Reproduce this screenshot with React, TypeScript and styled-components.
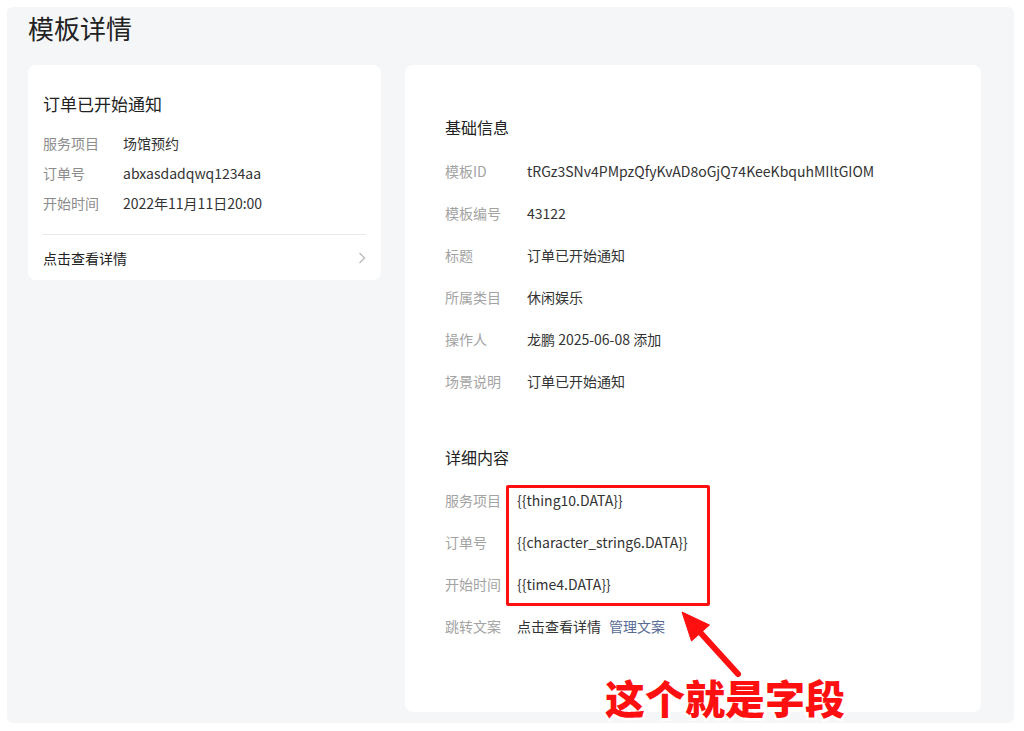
import React from 'react'
import styled, { createGlobalStyle } from 'styled-components'

const GlobalStyle = createGlobalStyle`
  html, body {
    margin: 0;
    padding: 0;
    background: #ffffff;
    font-family: "Noto Sans CJK SC", "Noto Sans", "Liberation Sans", sans-serif;
    color: #333333;
  }
  * {
    box-sizing: border-box;
  }
`

const Panel = styled.div`
  margin: 7px 10px 0 7px;
  height: 716px;
  background: #f5f6f8;
  border-radius: 6px;
  padding: 0 33px 0 21px;
  display: flex;
  flex-direction: column;
  gap: 16px;
`

const PageTitle = styled.h1`
  margin: 0;
  font-size: 26px;
  font-weight: 400;
  line-height: 42px;
  color: #222222;
`

const Columns = styled.div`
  display: flex;
  align-items: flex-start;
  gap: 24px;
`

const Card = styled.div<{ $width: number }>`
  position: relative;
  width: ${(p) => p.$width}px;
  background: #ffffff;
  border-radius: 8px;
`

const PreviewCard = styled(Card)`
  padding: 27px 15px 7px 15px;
`

const DetailCard = styled(Card)`
  height: 647px;
  padding: 50px 40px 0 40px;
`

const CardTitle = styled.div`
  font-size: 17px;
  line-height: 24px;
  color: #222222;
  margin-bottom: 12px;
`

const Row = styled.div<{ $height: number }>`
  display: flex;
  align-items: center;
  height: ${(p) => p.$height}px;
  font-size: 14px;
  white-space: nowrap;
`

const Label = styled.span<{ $width: number }>`
  width: ${(p) => p.$width}px;
  flex-shrink: 0;
  color: #a3a3a3;
`

const Value = styled.span`
  color: #333333;
`

const PreviewLabel = styled(Label)`
  color: #8c8c8c;
`

const Divider = styled.div`
  height: 1px;
  background: #e8e8e8;
  margin-top: 16px;
`

const LinkRow = styled(Row)`
  justify-content: space-between;
  color: #222222;
`

const SectionTitle = styled.div<{ $gap: number; $top?: number }>`
  font-size: 16px;
  line-height: 24px;
  color: #222222;
  margin-top: ${(p) => p.$top || 0}px;
  margin-bottom: ${(p) => p.$gap}px;
`

const ManageLink = styled.a`
  color: #576b95;
  text-decoration: none;
  margin-left: 8px;
`

const RedBox = styled.div`
  position: absolute;
  left: 101px;
  top: 420px;
  width: 204px;
  height: 121px;
  border: 3px solid #ff1010;
  border-radius: 2px;
`

const ArrowSvg = styled.svg`
  position: absolute;
  left: 265px;
  top: 535px;
`

const Annotation = styled.div`
  position: absolute;
  left: 200px;
  top: 608px;
  font-size: 40px;
  line-height: 48px;
  font-weight: 900;
  color: #ff1010;
  white-space: nowrap;
  letter-spacing: 0px;
  -webkit-text-stroke: 5px #ffffff;
  paint-order: stroke fill;
`

const previewRows = [
  { label: '服务项目', value: '场馆预约' },
  { label: '订单号', value: 'abxasdadqwq1234aa' },
  { label: '开始时间', value: '2022年11月11日20:00' },
]

const baseRows = [
  { label: '模板ID', value: 'tRGz3SNv4PMpzQfyKvAD8oGjQ74KeeKbquhMIltGIOM' },
  { label: '模板编号', value: '43122' },
  { label: '标题', value: '订单已开始通知' },
  { label: '所属类目', value: '休闲娱乐' },
  { label: '操作人', value: '龙鹏 2025-06-08 添加' },
  { label: '场景说明', value: '订单已开始通知' },
]

const fieldRows = [
  { label: '服务项目', value: '{{thing10.DATA}}' },
  { label: '订单号', value: '{{character_string6.DATA}}' },
  { label: '开始时间', value: '{{time4.DATA}}' },
]

const Chevron = (
  <svg width="8" height="12" viewBox="0 0 8 12">
    <polyline points="1.5,1 6.5,6 1.5,11" fill="none" stroke="#b8b8b8" strokeWidth="1.3" />
  </svg>
)

export default function App() {
  return (
    <>
      <GlobalStyle />
      <Panel>
        <PageTitle>模板详情</PageTitle>
        <Columns>
          <PreviewCard $width={353}>
            <CardTitle>订单已开始通知</CardTitle>
            {previewRows.map((row) => (
              <Row key={row.label} $height={30}>
                <PreviewLabel $width={80}>{row.label}</PreviewLabel>
                <Value>{row.value}</Value>
              </Row>
            ))}
            <Divider />
            <LinkRow $height={30} style={{ marginTop: 8 }}>
              <span>点击查看详情</span>
              {Chevron}
            </LinkRow>
          </PreviewCard>

          <DetailCard $width={576}>
            <SectionTitle $gap={11}>基础信息</SectionTitle>
            {baseRows.map((row) => (
              <Row key={row.label} $height={42}>
                <Label $width={82}>{row.label}</Label>
                <Value>{row.value}</Value>
              </Row>
            ))}
            <SectionTitle $top={43} $gap={10}>
              详细内容
            </SectionTitle>
            {fieldRows.map((row) => (
              <Row key={row.label} $height={42}>
                <Label $width={72}>{row.label}</Label>
                <Value>{row.value}</Value>
              </Row>
            ))}
            <Row $height={42}>
              <Label $width={72}>跳转文案</Label>
              <Value>点击查看详情</Value>
              <ManageLink href="#">管理文案</ManageLink>
            </Row>

            <RedBox />
            <ArrowSvg width="80" height="80" viewBox="0 0 80 80">
              <line x1="28" y1="30" x2="68" y2="74" stroke="#ffffff" strokeWidth="10" strokeLinecap="round" />
              <polygon points="10,10 42,25 22,44" fill="#ffffff" stroke="#ffffff" strokeWidth="4" strokeLinejoin="round" />
              <line x1="28" y1="30" x2="68" y2="74" stroke="#ff1010" strokeWidth="6" strokeLinecap="round" />
              <polygon points="12,12 39.5,25 21.5,41" fill="#ff1010" stroke="#ff1010" strokeWidth="1" strokeLinejoin="round" />
            </ArrowSvg>
            <Annotation>这个就是字段</Annotation>
          </DetailCard>
        </Columns>
      </Panel>
    </>
  )
}
